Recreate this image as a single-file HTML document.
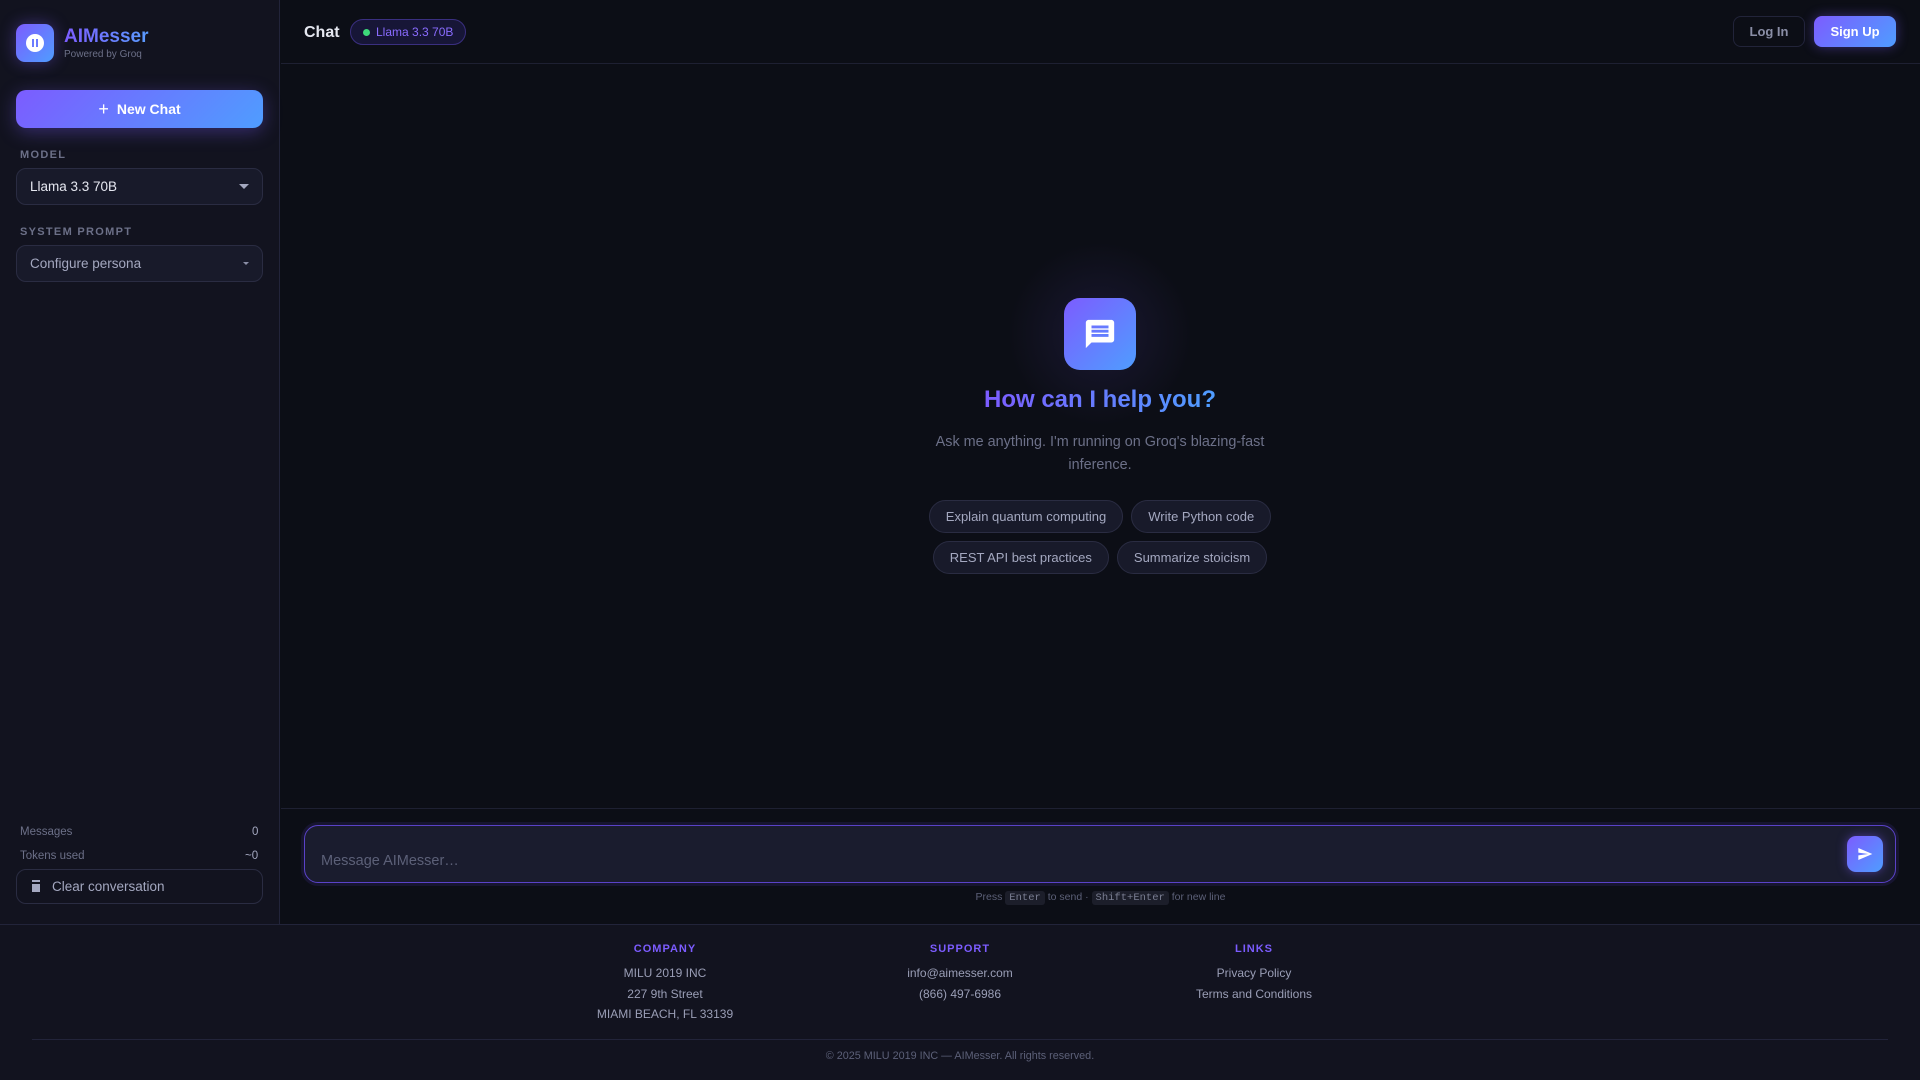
<!DOCTYPE html>
<html><head><meta charset="utf-8"><style>
*{box-sizing:border-box;margin:0;padding:0}
body{width:1920px;height:1080px;background:#0c0e16;font-family:"Liberation Sans",sans-serif;position:relative;overflow:hidden;color:#e5e7f0}
.abs{position:absolute}
.side{left:0;top:0;width:280px;height:924px;background:#12131f;border-right:1px solid #22243a}
.grad{background:linear-gradient(135deg,#7c5cff,#4f9dff)}
.lbl{font-size:11px;font-weight:bold;letter-spacing:1.3px;color:#6c7088}
.sel{left:16px;width:247px;height:37px;border:1px solid #2a2c42;border-radius:10px;background:#181a2a;font-size:14px;padding:0 13px;display:flex;align-items:center;justify-content:space-between}
.chip{display:inline-block;height:33px;line-height:31px;border:1px solid #2a2c42;border-radius:17px;background:#181a2a;color:#a4a8c0;font-size:13px;padding:0 16px;margin:0 4px}
.fh{font-size:11px;font-weight:bold;letter-spacing:1px;color:#7c5cff;text-align:center}
.fl{font-size:12px;color:#9a9eb6;text-align:center;line-height:20.5px}
kbd{font-family:"Liberation Mono",monospace;background:#1c1e2a;border-radius:3px;padding:1px 4px;font-size:10.5px;color:#7a7e92}
</style></head><body>
<div class="abs side"></div>
<div class="abs grad" style="left:16px;top:24px;width:38px;height:38px;border-radius:9px;box-shadow:0 0 16px rgba(124,92,255,.4)"></div>
<div class="abs" style="left:26px;top:34px;width:18px;height:18px;border-radius:50%;background:#fff"></div>
<div class="abs" style="left:32px;top:39px;width:2px;height:8px;background:#6c7cff"></div>
<div class="abs" style="left:36px;top:39px;width:2px;height:8px;background:#6c7cff"></div>
<div class="abs" style="left:64px;top:26px;font-size:19px;font-weight:bold;background:linear-gradient(90deg,#7c5cff,#5a9cff);-webkit-background-clip:text;color:transparent">AIMesser</div>
<div class="abs" style="left:64px;top:49px;font-size:10px;color:#6c7088">Powered by Groq</div>
<div class="abs grad" style="left:16px;top:90px;width:247px;height:38px;border-radius:10px;box-shadow:0 4px 18px rgba(124,92,255,.35);color:#fff;font-weight:bold;font-size:14px;display:flex;align-items:center;justify-content:center"><span style="font-size:18px;font-weight:normal;margin-right:8px">+</span>New Chat</div>
<div class="abs lbl" style="left:20px;top:149px">MODEL</div>
<div class="abs sel" style="top:168px;color:#e5e7f0;font-size:13.5px">Llama 3.3 70B<span style="border:5px solid transparent;border-top:5px solid #a4a8c0;margin-top:5px"></span></div>
<div class="abs lbl" style="left:20px;top:226px">SYSTEM PROMPT</div>
<div class="abs sel" style="top:245px;color:#a4a8c0;font-size:13.5px">Configure persona<span style="border:3px solid transparent;border-top:3px solid #8a8ea6;margin-top:3px"></span></div>
<div class="abs" style="left:20px;top:826px;font-size:11.5px;color:#6c7088">Messages</div>
<div class="abs" style="left:252px;top:826px;font-size:11.5px;color:#a4a8c0">0</div>
<div class="abs" style="left:20px;top:850px;font-size:11.5px;color:#6c7088">Tokens used</div>
<div class="abs" style="left:245px;top:850px;font-size:11.5px;color:#a4a8c0">~0</div>
<div class="abs" style="left:16px;top:869px;width:247px;height:35px;border:1px solid #2a2c42;border-radius:10px;display:flex;align-items:center;padding-left:15px;font-size:13.5px;color:#a4a8c0"><span style="display:inline-block;width:8px;height:10px;background:#a4a8c0;border-top:2px solid #12131f;box-shadow:0 -2px 0 #a4a8c0;margin-right:12px"></span>Clear conversation</div>
<!-- header -->
<div class="abs" style="left:281px;top:63px;width:1639px;height:1px;background:#1e2032"></div>
<div class="abs" style="left:304px;top:24px;font-size:16px;font-weight:bold;color:#e5e7f0">Chat</div>
<div class="abs" style="left:350px;top:19px;width:116px;height:26px;border:1px solid #3a2f80;border-radius:13px;background:#171637;font-size:12px;color:#8a6cff;display:flex;align-items:center;padding-left:12px"><span style="width:7px;height:7px;border-radius:50%;background:#3dd97a;margin-right:6px"></span>Llama 3.3 70B</div>
<div class="abs" style="left:1733px;top:16px;width:72px;height:31px;border:1px solid #22243a;border-radius:8px;font-size:13px;font-weight:bold;color:#8a8ea6;display:flex;align-items:center;justify-content:center">Log In</div>
<div class="abs grad" style="left:1814px;top:16px;width:82px;height:31px;border-radius:8px;font-size:13px;font-weight:bold;color:#fff;display:flex;align-items:center;justify-content:center;box-shadow:0 0 12px rgba(124,92,255,.4)">Sign Up</div>
<!-- center -->
<div class="abs" style="left:1000px;top:234px;width:200px;height:200px;border-radius:50%;background:radial-gradient(rgba(124,92,255,.12),transparent 65%)"></div>
<div class="abs grad" style="left:1064px;top:298px;width:72px;height:72px;border-radius:16px"></div>
<svg class="abs" style="left:1083px;top:317px" width="34" height="34" viewBox="0 0 24 24"><path fill="#fff" d="M20 2H4c-1.1 0-2 .9-2 2v18l4-4h14c1.1 0 2-.9 2-2V4c0-1.1-.9-2-2-2zm-2 12H6v-2h12v2zm0-3H6V9h12v2zm0-3H6V6h12v2z"/></svg>
<div class="abs" style="left:900px;top:386px;width:400px;text-align:center;font-size:24px;font-weight:bold"><span style="background:linear-gradient(90deg,#7c5cff,#4f9dff);-webkit-background-clip:text;color:transparent">How can I help you?</span></div>
<div class="abs" style="left:925px;top:431px;width:350px;text-align:center;font-size:14.4px;line-height:23px;color:#6c7088">Ask me anything. I'm running on Groq's blazing-fast inference.</div>
<div class="abs" style="left:800px;top:500px;width:600px;text-align:center"><span class="chip">Explain quantum computing</span><span class="chip">Write Python code</span></div>
<div class="abs" style="left:800px;top:541px;width:600px;text-align:center"><span class="chip">REST API best practices</span><span class="chip">Summarize stoicism</span></div>
<!-- input -->
<div class="abs" style="left:281px;top:808px;width:1639px;height:1px;background:#1e2032"></div>
<div class="abs" style="left:304px;top:825px;width:1592px;height:58px;border:1.5px solid #5a42c8;border-radius:14px;background:#1a1c2e;box-shadow:0 0 0 3px rgba(90,66,200,.15)"></div>
<div class="abs" style="left:321px;top:853px;font-size:14.5px;color:#5c6078">Message AIMesser…</div>
<div class="abs grad" style="left:1847px;top:836px;width:36px;height:36px;border-radius:9px;box-shadow:0 0 10px rgba(124,92,255,.5)"></div>
<svg class="abs" style="left:1857px;top:846px" width="16" height="16" viewBox="0 0 24 24"><path fill="#fff" d="M2 21l21-9L2 3v7l15 2-15 2z"/></svg>
<div class="abs" style="left:281px;top:891px;width:1639px;text-align:center;font-size:10.5px;color:#5c6078">Press <kbd>Enter</kbd> to send · <kbd>Shift+Enter</kbd> for new line</div>
<!-- footer -->
<div class="abs" style="left:0;top:924px;width:1920px;height:156px;background:#12131f;border-top:1px solid #22243a"></div>
<div class="abs fh" style="left:565px;top:943px;width:200px">COMPANY</div>
<div class="abs fl" style="left:565px;top:963px;width:200px">MILU 2019 INC<br>227 9th Street<br>MIAMI BEACH, FL 33139</div>
<div class="abs fh" style="left:860px;top:943px;width:200px">SUPPORT</div>
<div class="abs fl" style="left:860px;top:963px;width:200px">info@aimesser.com<br>(866) 497-6986</div>
<div class="abs fh" style="left:1154px;top:943px;width:200px">LINKS</div>
<div class="abs fl" style="left:1154px;top:963px;width:200px">Privacy Policy<br>Terms and Conditions</div>
<div class="abs" style="left:32px;top:1039px;width:1856px;height:1px;background:#22243a"></div>
<div class="abs" style="left:0;top:1050px;width:1920px;text-align:center;font-size:10.8px;color:#5c6078">© 2025 MILU 2019 INC — AIMesser. All rights reserved.</div>
</body></html>
